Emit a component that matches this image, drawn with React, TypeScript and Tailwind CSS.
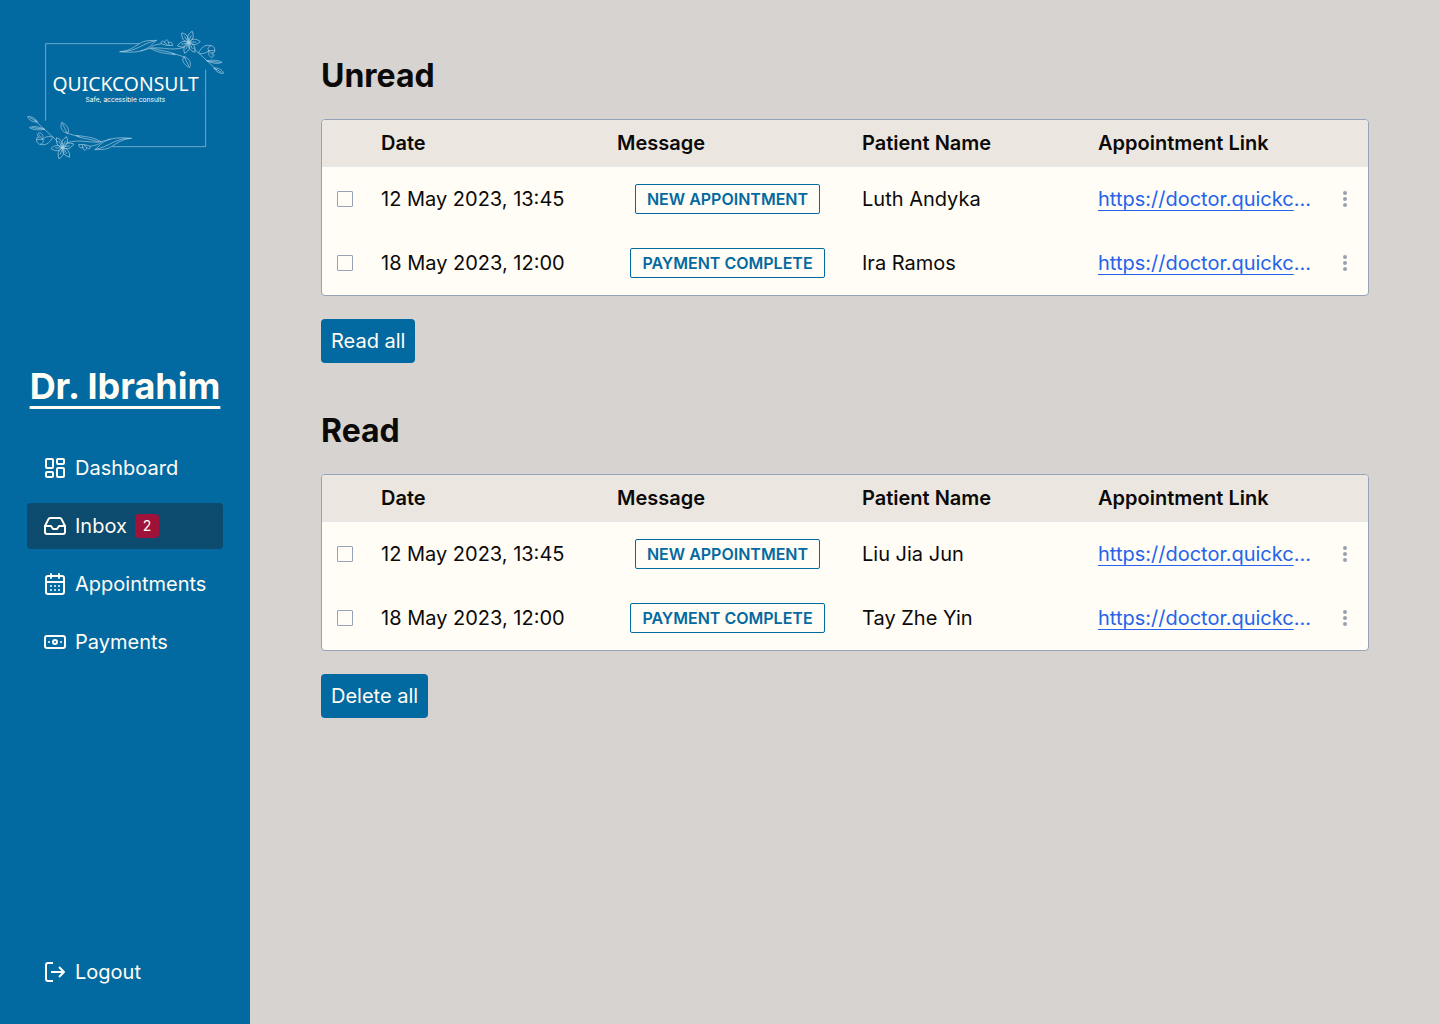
import type { ReactNode } from "react";
import { Banknote, CalendarDays, Inbox, LayoutDashboard } from "lucide-react";

type Message = { date: string; label: string; patient: string; link: string };

const LINK = "https://doctor.quickconsult.com/appointments";
const LINK_LABEL_LENGTH = 21;

const unread: Message[] = [
  { date: "12 May 2023, 13:45", label: "New appointment", patient: "Luth Andyka", link: LINK },
  { date: "18 May 2023, 12:00", label: "Payment complete", patient: "Ira Ramos", link: LINK },
];

const read: Message[] = [
  { date: "12 May 2023, 13:45", label: "New appointment", patient: "Liu Jia Jun", link: LINK },
  { date: "18 May 2023, 12:00", label: "Payment complete", patient: "Tay Zhe Yin", link: LINK },
];

function Petal({ angle }: { angle: number }) {
  return (
    <g transform={`rotate(${angle} 506 67)`}>
      <path d="M506 67 C494 56 496 44 506 32 C516 44 517 56 506 67" />
      <path d="M506 67 C505 58 506 52 507 46" />
    </g>
  );
}

function Spray() {
  return (
    <g>
      <path d="M300 95 C335 93 348 74 370 65 C384 60 398 62 410 61 C396 70 390 86 362 93 C342 98 320 97 300 95" />
      <path d="M304 95 C350 95 362 72 406 62" />
      <path d="M362 93 C388 84 404 82 430 85 C456 88 474 88 492 82" />
      <path d="M392 82 C404 72 416 74 424 71 C436 76 446 78 458 76" />
      <path d="M424 71 C420 62 430 61 434 68 C434 56 446 58 445 68 C454 64 460 70 456 76" />
      <path d="M434 68 L442 75 M445 68 L448 76" />
      <path d="M390 84 C410 98 436 100 466 104 C448 92 420 94 398 84" />
      <path d="M456 99 C468 104 482 106 494 112" />
      <path d="M492 110 C482 118 492 136 509 143 C515 128 508 114 492 110 M494 113 L506 138" />
      {[18, 86, 148, 200, 252, 324].map((angle) => (
        <Petal key={angle} angle={angle} />
      ))}
      <circle cx="506" cy="67" r="4" />
      <path d="M520 84 C540 104 562 122 590 150" />
      <path d="M536 99 C542 84 554 74 568 76 C580 76 586 84 584 92" />
      <path d="M540 101 C552 102 560 98 566 92 C562 86 564 80 572 78" />
      <path d="M566 92 L584 92 C586 98 580 100 576 98 M566 92 C562 100 568 110 574 112 C584 110 584 102 578 100 M566 92 L578 106" />
      <path d="M560 122 C572 128 592 134 606 127 C594 119 576 120 560 122 M564 123 L598 127" />
      <path d="M582 144 C586 154 600 162 611 160 C608 150 594 142 582 144 M584 145 L604 157" />
    </g>
  );
}

function Logo() {
  return (
    <svg
      viewBox="21 30 591 390"
      className="h-[130px] w-[197px] shrink-0"
      fill="none"
      role="img"
      aria-label="QuickConsult"
    >
      <g stroke="#7fb5d2" strokeWidth="2.6">
        <path d="M357 71 H77 V302" />
        <path d="M277 380 H557 V149" />
      </g>
      <g stroke="#a9cfe3" strokeWidth="2" strokeLinecap="round" strokeLinejoin="round">
        <Spray />
        <g transform="rotate(180 317 225)">
          <Spray />
        </g>
      </g>
      <g fill="#fffdf5" textAnchor="middle">
        <text x="317" y="214" fontSize="58" className="font-['Noto_Sans',sans-serif]">
          QUICKCONSULT
        </text>
        <text x="316" y="245" fontSize="20" className="font-['Inter',sans-serif]">
          Safe, accessible consults
        </text>
      </g>
    </svg>
  );
}

function LogoutIcon() {
  return (
    <svg
      viewBox="0 0 24 24"
      className="size-6"
      fill="none"
      stroke="currentColor"
      strokeWidth="2"
      strokeLinejoin="round"
      aria-hidden="true"
    >
      <path d="M10 3H5a2 2 0 0 0-2 2v14a2 2 0 0 0 2 2h5" />
      <path d="M8 12h13" />
      <path d="M16 7l5 5-5 5" />
    </svg>
  );
}

function NavItem({
  icon,
  label,
  active = false,
  count,
}: {
  icon: ReactNode;
  label: string;
  active?: boolean;
  count?: number;
}) {
  return (
    <a
      href="#"
      aria-current={active ? "page" : undefined}
      className={
        active
          ? "flex h-[46px] items-center gap-2 rounded bg-[#0c4a6e] px-4"
          : "flex h-[46px] items-center gap-2 rounded px-4"
      }
    >
      {icon}
      <span>{label}</span>
      {count !== undefined && (
        <span className="flex size-6 items-center justify-center rounded-sm bg-[#9f1239] text-sm">{count}</span>
      )}
    </a>
  );
}

function Sidebar() {
  return (
    <aside className="flex w-[250px] shrink-0 flex-col bg-[#0369a1] px-[27px] pt-[30px] pb-[29px] text-xl text-[#fffdf5]">
      <Logo />
      <a
        href="#"
        className="mt-[206px] text-center text-4xl font-bold whitespace-nowrap underline decoration-3 underline-offset-[7px]"
      >
        Dr. Ibrahim
      </a>
      <nav className="mt-[39px] flex flex-col gap-3">
        <NavItem icon={<LayoutDashboard />} label="Dashboard" />
        <NavItem icon={<Inbox />} label="Inbox" active count={2} />
        <NavItem icon={<CalendarDays />} label="Appointments" />
        <NavItem icon={<Banknote />} label="Payments" />
      </nav>
      <div className="mt-auto">
        <NavItem icon={<LogoutIcon />} label="Logout" />
      </div>
    </aside>
  );
}

function MessageTable({ title, rows }: { title: string; rows: Message[] }) {
  return (
    <div className="overflow-hidden rounded border border-[#94a3b8] bg-[#fffdf5]">
      <table aria-label={title} className="w-full table-fixed border-separate border-spacing-0 text-left">
        <thead className="bg-[#ebe7e0]">
          <tr className="h-[47px] *:border-b *:border-gray-200">
            <th className="w-[43px]" aria-label="Select" />
            <th className="w-[236px] px-4 font-semibold">Date</th>
            <th className="w-[245px] px-4 font-semibold">Message</th>
            <th className="w-[236px] px-4 font-semibold">Patient Name</th>
            <th className="w-[244px] px-4 font-semibold">Appointment Link</th>
            <th className="w-[42px]" aria-label="Actions" />
          </tr>
        </thead>
        <tbody>
          {rows.map((row) => (
            <tr key={row.patient} className="h-16">
              <td className="pl-[15px]">
                <input
                  type="checkbox"
                  aria-label={`Select message for ${row.patient}`}
                  className="block size-4 appearance-none rounded-[1px] border border-[#94a3b8] checked:bg-[#0369a1]"
                />
              </td>
              <td className="px-4 whitespace-nowrap">{row.date}</td>
              <td className="pr-2 pl-4">
                <div className="flex justify-center">
                  <span className="rounded-xs border border-[#0369a1] px-[11px] text-base leading-7 font-semibold whitespace-nowrap text-[#0369a1] uppercase">
                    {row.label}
                  </span>
                </div>
              </td>
              <td className="px-4">{row.patient}</td>
              <td className="pl-4 whitespace-nowrap text-[#2563eb]">
                <a
                  href={row.link}
                  title={row.link}
                  className="underline decoration-1 underline-offset-4 [text-decoration-skip-ink:none]"
                >
                  {row.link.slice(0, LINK_LABEL_LENGTH)}
                </a>
                …
              </td>
              <td>
                <button
                  type="button"
                  aria-label={`Options for ${row.patient}`}
                  className="flex h-6 w-[37px] items-center justify-center text-gray-400"
                >
                  <svg viewBox="0 0 4 16" className="h-4 w-1" fill="currentColor" aria-hidden="true">
                    <circle cx="2" cy="2" r="2" />
                    <circle cx="2" cy="8" r="2" />
                    <circle cx="2" cy="14" r="2" />
                  </svg>
                </button>
              </td>
            </tr>
          ))}
        </tbody>
      </table>
    </div>
  );
}

function MessageSection({ title, rows, action }: { title: string; rows: Message[]; action: string }) {
  return (
    <section>
      <h2 className="mb-[23px] text-[32px] leading-10 font-bold">{title}</h2>
      <MessageTable title={title} rows={rows} />
      <button type="button" className="mt-[23px] h-11 rounded bg-[#0369a1] px-[10px] text-[#fffdf5]">
        {action}
      </button>
    </section>
  );
}

export default function App() {
  return (
    <div className="flex min-h-screen bg-stone-300 font-['Inter',sans-serif] text-stone-950">
      <Sidebar />
      <main className="flex min-w-0 flex-1 flex-col gap-12 px-[71px] py-14 text-xl">
        <MessageSection title="Unread" rows={unread} action="Read all" />
        <MessageSection title="Read" rows={read} action="Delete all" />
      </main>
    </div>
  );
}
